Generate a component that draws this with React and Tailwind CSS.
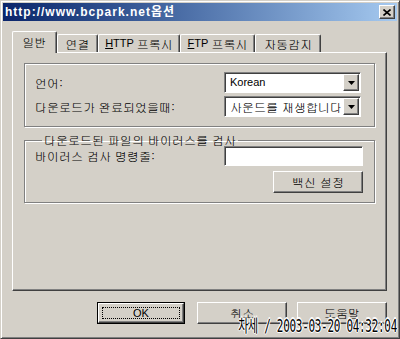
import React from "react";

const raised =
  "border border-t-white border-l-white border-r-[#404040] border-b-[#404040] shadow-[inset_-1px_-1px_0_#808080]";
const sunken =
  "border border-t-[#808080] border-l-[#808080] border-r-white border-b-white shadow-[inset_1px_1px_0_#404040]";
const ko = "font-['Gulim','Noto_Sans_CJK_KR',sans-serif]";

const Combo = ({ value, latin }) => (
  <div className={`${sunken} bg-white w-[137px] h-[21px] flex items-center`}>
    <span
      className={`flex-1 pl-[5px] text-black ${
        latin ? "font-['Liberation_Sans',sans-serif] text-[11px]" : "text-[12px]"
      }`}
    >
      {value}
    </span>
    <div className={`${raised} bg-[#d4d0c8] w-[16px] h-[17px] mr-[1px] flex items-center justify-center`}>
      <svg width="7" height="4" viewBox="0 0 7 4">
        <path d="M0 0h7L3.5 4z" fill="black" />
      </svg>
    </div>
  </div>
);

const Tab = ({ children, w, active }) => (
  <div
    className={`border-t border-l border-r border-t-white border-l-white border-r-[#404040] shadow-[inset_-1px_0_0_#808080] rounded-t-[2px] bg-[#d4d0c8] flex items-center justify-center text-[12px] text-black ${
      active ? "h-[22px] -mb-px relative z-10 pb-[2px]" : "h-[18px]"
    }`}
    style={{ width: w }}
  >
    {children}
  </div>
);

const Button = ({ children, w, def }) => (
  <div
    className={`h-[22px] flex items-center justify-center text-[12px] text-black ${
      def ? "border border-black" : ""
    }`}
    style={{ width: w }}
  >
    <div className={`${raised} w-full h-full flex items-center justify-center bg-[#d4d0c8]`}>
      {def ? (
        <div className="border border-dotted border-black w-[calc(100%-6px)] h-[calc(100%-6px)] flex items-center justify-center font-['Liberation_Sans',sans-serif] text-[11px]">
          {children}
        </div>
      ) : (
        children
      )}
    </div>
  </div>
);

export default function App() {
  return (
    <div
      className={`${ko} relative w-[400px] h-[339px] bg-[#d4d0c8] border border-t-[#d4d0c8] border-l-[#d4d0c8] border-r-[#404040] border-b-[#404040] shadow-[inset_1px_1px_0_white,inset_-1px_-1px_0_#808080] p-[2px] overflow-hidden`}
    >
      {/* title bar */}
      <div className="h-[18px] bg-linear-to-r from-[#0a246a] to-[#a6caf0] flex items-center justify-between pl-[2px] pr-[2px]">
        <span className="font-['Liberation_Sans','Noto_Sans_CJK_KR',sans-serif] font-bold text-[12px] text-white tracking-[1px] leading-none">
          http://www.bcpark.net옵션
        </span>
        <div className={`${raised} bg-[#d4d0c8] w-[16px] h-[14px] flex items-center justify-center`}>
          <svg width="8" height="7" viewBox="0 0 8 7">
            <path d="M0.5 0.5L7.5 6.5M7.5 0.5L0.5 6.5" stroke="black" strokeWidth="1.6" />
          </svg>
        </div>
      </div>

      <div className="pl-[9px] pr-[10px] pt-[10px]">
        {/* tabs */}
        <div className="flex items-end">
          <Tab w={45} active>일반</Tab>
          <Tab w={41}>연결</Tab>
          <Tab w={82}>
            <span className="font-['Liberation_Sans',sans-serif] text-[11px]">
              <u>H</u>TTP
            </span>
            <span className="ml-[3px]">프록시</span>
          </Tab>
          <Tab w={75}>
            <span className="font-['Liberation_Sans',sans-serif] text-[11px]">
              <u>F</u>TP
            </span>
            <span className="ml-[3px]">프록시</span>
          </Tab>
          <Tab w={66}>자동감지</Tab>
        </div>

        {/* panel */}
        <div className={`${raised} h-[239px] pl-[11px] pr-[11px] pt-[10px]`}>
          <div className="border border-[#808080] shadow-[1px_1px_0_white,inset_1px_1px_0_white] h-[64px] pl-[10px] pr-[13px] pt-[8px] flex flex-col gap-[3px] text-[12px] text-black">
            <div className="flex items-center justify-between">
              <span>언어:</span>
              <Combo value="Korean" latin />
            </div>
            <div className="flex items-center justify-between">
              <span>다운로드가 완료되었을때:</span>
              <Combo value="사운드를 재생합니다" />
            </div>
          </div>

          <fieldset className="mt-[6px] border border-[#808080] shadow-[1px_1px_0_white,inset_1px_1px_0_white] h-[70px] pl-[10px] pr-[11px] text-[12px] text-black">
            <legend className="ml-[7px] px-[2px] leading-[14px]">다운로드된 파일의 바이러스를 검사</legend>
            <div className="flex items-center justify-between mt-[-1px]">
              <span>바이러스 검사 명령줄:</span>
              <div className={`${sunken} bg-white w-[139px] h-[20px]`} />
            </div>
            <div className="flex justify-end mt-[5px]">
              <Button w={90}>백신 설정</Button>
            </div>
          </fieldset>
        </div>

        {/* bottom buttons */}
        <div className="flex justify-end mt-[11px] gap-[10px]">
          <div className="mr-[2px]">
            <Button w={88} def>OK</Button>
          </div>
          <Button w={90}>취소</Button>
          <Button w={90}>도움말</Button>
        </div>
      </div>

      {/* watermark */}
      <div className="absolute right-[2px] bottom-[3px] font-['DejaVu_Sans_Mono','Noto_Sans_CJK_KR',monospace] text-[11px] leading-none text-black scale-y-[1.6] origin-bottom-right tracking-[-0.3px] [text-shadow:1px_0_white,-1px_0_white,0_1px_white,0_-1px_white]">
        차세 / 2003-03-20 04:32:04
      </div>
    </div>
  );
}
